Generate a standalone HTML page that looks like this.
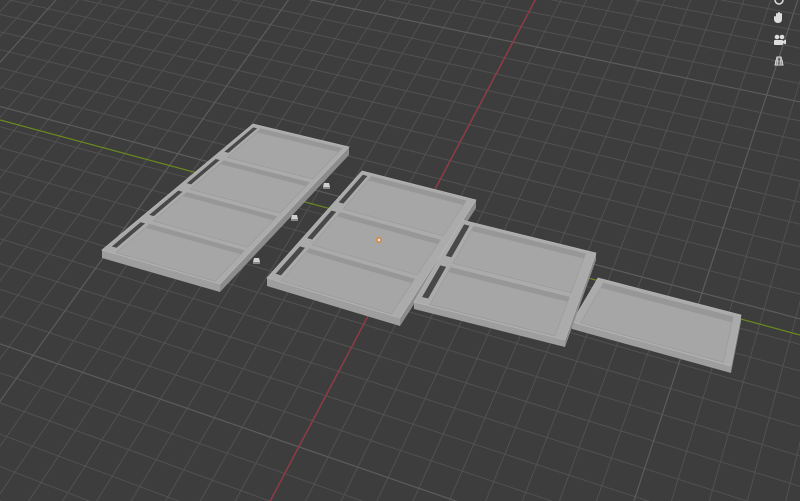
<!DOCTYPE html>
<html><head><meta charset="utf-8"><style>
html,body{margin:0;padding:0;background:#3d3d3d;overflow:hidden;width:800px;height:501px}
svg{display:block;position:absolute;left:0;top:0}
</style></head><body>
<svg id="s" width="800" height="501" viewBox="0 0 800 501" xmlns="http://www.w3.org/2000/svg">
<rect width="800" height="501" fill="#3d3d3d"/>
<g id="grid" stroke="#515151" stroke-width="1" fill="none"></g>
<g id="grid2" stroke="#5c5c5c" stroke-width="1.2" fill="none"></g>
<line x1="0" y1="120" x2="800" y2="335" stroke="#6a8a1e" stroke-width="1.2"/>
<line x1="535" y1="0" x2="270" y2="501" stroke="#9a3540" stroke-width="1.2"/>
<g id="obj"></g>
<circle cx="379" cy="240" r="2.5" fill="none" stroke="#e08a3a" stroke-width="1.3"/>
<circle cx="379" cy="240" r="1" fill="#fff"/>
<g fill="#ddd" stroke="none">
 <circle cx="779" cy="0" r="4" fill="none" stroke="#ddd" stroke-width="1.5"/>
 <path d="M774 22 l0-5 q0-1 1-1 q1 0 1 1 l0-3 q0-1 1-1 q1 0 1 1 l0 3 l0-4 q0-1 1-1 q1 0 1 1 l0 4 l0-3 q0-1 1-1 q1 0 1 1 l0 5 q0 4-4 4 q-3 0-4-3 z"/>
 <circle cx="777" cy="37" r="2.3"/><circle cx="782" cy="37" r="2.3"/>
 <rect x="774" y="40" width="9" height="5" rx="1"/><path d="M783 41 l3-1.5 v5 l-3-1.5z"/>
 <path d="M775 65 l2-8 h4 l2 8 z" fill="none" stroke="#ddd" stroke-width="1"/>
 <path d="M775 61 h8 M776 63 h7 M778 57 l-1 8 M780 57 l1 8" stroke="#ddd" stroke-width="0.8" fill="none"/>
</g>
</svg>
<script>
(function(){
var NS="http://www.w3.org/2000/svg";
var a=0.0117*1.12,b=0.0068*1.12;
function P(u,v){var w=a*u+b*v+1;return [(a*u*1223-b*v*3000+420)/w,(a*u*-1300-b*v*690+218)/w,w];}
var d="",d2="";
for(var k=-80;k<=120;k++){
 var vmin=Math.max(-300,(-(1+a*k)/b)+2);
 var p1=P(k,vmin),p2=P(k,400);
 var s="M"+p1[0].toFixed(1)+" "+p1[1].toFixed(1)+"L"+p2[0].toFixed(1)+" "+p2[1].toFixed(1);
 if(p1[2]>0&&p2[2]>0){if(k%10==0)d2+=s;else d+=s;}
}
for(var k=-150;k<=250;k++){
 var umin=Math.max(-300,(-(1+b*k)/a)+2);
 var p1=P(umin,k),p2=P(300,k);
 var s="M"+p1[0].toFixed(1)+" "+p1[1].toFixed(1)+"L"+p2[0].toFixed(1)+" "+p2[1].toFixed(1);
 if(p1[2]>0&&p2[2]>0){if(k%10==0)d2+=s;else d+=s;}
}
var pa=document.createElementNS(NS,'path');pa.setAttribute('d',d);document.getElementById('grid').appendChild(pa);
var pb=document.createElementNS(NS,'path');pb.setAttribute('d',d2);document.getElementById('grid2').appendChild(pb);

var o=document.getElementById('obj');
function poly(pts,fill,stroke){var e=document.createElementNS(NS,'polygon');e.setAttribute('points',pts.map(function(p){return p[0].toFixed(1)+","+p[1].toFixed(1)}).join(" "));e.setAttribute('fill',fill);if(stroke){e.setAttribute('stroke',stroke);e.setAttribute('stroke-width','0.7');}o.appendChild(e);}
function bl(A,B,C,D,s,t){
 var x1=A[0]+(B[0]-A[0])*s,y1=A[1]+(B[1]-A[1])*s,x2=D[0]+(C[0]-D[0])*s,y2=D[1]+(C[1]-D[1])*s;
 return [x1+(x2-x1)*t,y1+(y2-y1)*t];}
function q(A,B,C,D,s0,s1,t0,t1){return [bl(A,B,C,D,s0,t0),bl(A,B,C,D,s1,t0),bl(A,B,C,D,s1,t1),bl(A,B,C,D,s0,t1)];}
function tray(A,B,C,D,n,th,slot,s0,s1,ss0,ss1){
 poly([D,C,[C[0],C[1]+th],[D[0],D[1]+th]],'#9e9e9e');
 poly([C,B,[B[0],B[1]+th],[C[0],C[1]+th]],'#8c8c8c');
 poly([A,B,C,D],'#ababab','#b6b6b6');
 var m=0.06/n;
 for(var i=0;i<n;i++){
  var t0=i/n+m*1.2,t1=(i+1)/n-m*0.5;
  poly(q(A,B,C,D,s0,s1,t0,t1),'#a6a6a6','#9a9a9a');
  poly(q(A,B,C,D,s0,s1,t0,t0+(t1-t0)*0.12),'#979797');
  if(slot){poly(q(A,B,C,D,ss0,ss1,t0+0.01/n,t1-0.12/n),'#484848');}
 }
}
tray([253,124],[349,147],[220,284],[102,250],4,8,true,0.11,0.95,0.035,0.075);
tray([598,278],[741,315],[731,366],[572,322],1,7,false,0.05,0.95,0,0);
tray([362,171],[476,200],[400,318],[267,278],3,8,true,0.1,0.93,0.03,0.07);
tray([462,220],[596,253],[565,340],[414,302],2,7,true,0.1,0.93,0.03,0.07);
[[326,185],[294,217],[256,260]].forEach(function(p){
 poly([[p[0]-3,p[1]+2],[p[0]-2,p[1]-2],[p[0]+3,p[1]-2],[p[0]+4,p[1]+2]],'#d0d0d0');
 poly([[p[0]-3,p[1]+2],[p[0]+4,p[1]+2],[p[0]+4,p[1]+4],[p[0]-3,p[1]+4]],'#8a8a8a');
});
})();
</script>
</body></html>
